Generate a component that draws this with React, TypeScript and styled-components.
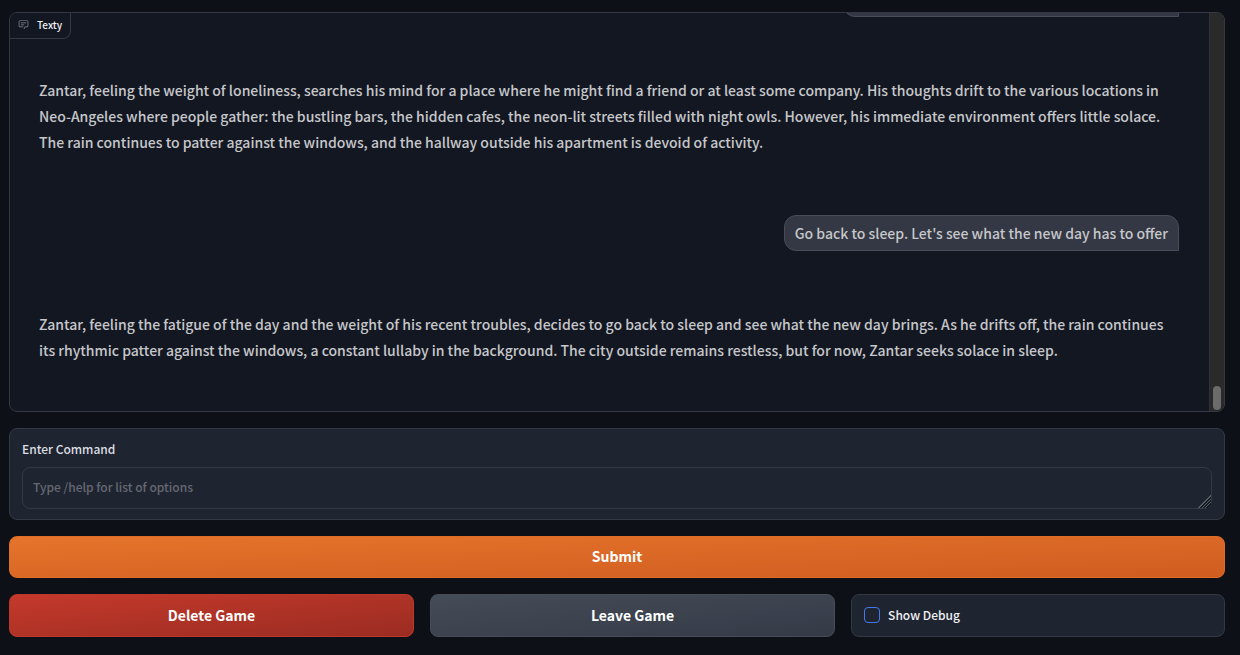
import React from "react";
import styled, { createGlobalStyle } from "styled-components";

const GlobalStyle = createGlobalStyle`
  *, *::before, *::after { box-sizing: border-box; }
  body {
    margin: 0;
    background: #0d1017;
    color: #f0f1f4;
    font-family: "Source Sans Pro", "Noto Sans CJK SC", "Noto Sans", sans-serif;
    font-size: 12px;
    font-weight: 500;
  }
`;

const Page = styled.main`
  display: flex;
  flex-direction: column;
  gap: 16px;
  padding: 12px 15px 16px 9px;
`;

const ChatPanel = styled.section`
  position: relative;
  display: flex;
  height: 400px;
  overflow: hidden;
  background: #131722;
  border: 1px solid #343844;
  border-radius: 8px;
`;

const ChatLabel = styled.h2`
  position: absolute;
  top: 0;
  left: 0;
  display: flex;
  align-items: center;
  gap: 8px;
  height: 26px;
  margin: 0;
  padding: 0 8px 2px;
  background: #131722;
  border: solid #343844;
  border-width: 0 1px 1px 0;
  border-radius: 0 0 8px 0;
  font-size: 10px;
  font-weight: 500;
  line-height: 16px;

  svg { color: #8b8e96; }
`;

const Messages = styled.div`
  flex: 1;
  min-width: 0;
  display: flex;
  flex-direction: column;
  justify-content: flex-end;
  gap: 60px;
  padding: 0 30px 48px 29px;
`;

const BotMessage = styled.p`
  margin: 0;
  padding-right: 8px;
  color: #c6c7ca;
  font-size: 14px;
  line-height: 26px;
`;

const UserMessage = styled.p<{ $minWidth?: number }>`
  align-self: flex-end;
  flex-shrink: 0;
  min-width: ${(p) => p.$minWidth ?? 0}px;
  min-height: 36px;
  margin: 0;
  padding: 4px 10px;
  background: #343844;
  border: 1px solid #484c58;
  border-radius: 12px 12px 0 12px;
  color: #c6c7ca;
  font-size: 14px;
  line-height: 26px;
`;

const ScrollTrack = styled.div`
  display: flex;
  flex-direction: column;
  justify-content: flex-end;
  align-items: center;
  width: 15px;
  padding-bottom: 1px;
  background: #2a2a2a;
  border-left: 1px solid #323232;
`;

const ScrollThumb = styled.div`
  width: 8px;
  height: 24px;
  background: #6b6b6b;
  border-radius: 4px;
`;

const Block = styled.div`
  background: #1f2530;
  border: 1px solid #343844;
  border-radius: 8px;
`;

const CommandBlock = styled(Block)`
  display: flex;
  flex-direction: column;
  gap: 8px;
  padding: 10px 12px;
`;

const CommandLabel = styled.label`
  color: #dcdee3;
  line-height: 20px;
`;

const CommandInput = styled.textarea`
  display: block;
  width: 100%;
  height: 42px;
  padding: 9px 10px;
  background: #1f2530;
  border: 1px solid #343844;
  border-radius: 8px;
  color: #f0f1f4;
  font: inherit;
  line-height: 20px;
  resize: vertical;
  overflow: hidden;

  &::placeholder { color: #656873; opacity: 1; }

  &::-webkit-resizer {
    background: linear-gradient(
      135deg,
      transparent 56%,
      #565b64 56% 61%, #171b23 61% 67%,
      #565b64 67% 72%, #171b23 72% 78%,
      #565b64 78% 83%, #171b23 83% 88%,
      transparent 88%
    );
  }
`;

const tones = {
  primary: { from: "#e5742b", to: "#d05c20", border: "#e06c25" },
  stop: { from: "#c4392b", to: "#9b2c22", border: "#bd372a" },
  secondary: { from: "#444c57", to: "#353a47", border: "#464c58" },
};

const Button = styled.button<{ $tone: keyof typeof tones }>`
  min-height: 42px;
  padding: 7px 16px 9px;
  background: linear-gradient(to bottom right, ${(p) => tones[p.$tone].from}, ${(p) => tones[p.$tone].to});
  border: 1px solid ${(p) => tones[p.$tone].border};
  border-radius: 8px;
  color: #fff;
  font: inherit;
  font-size: 14px;
  font-weight: 700;
  line-height: 24px;
  cursor: pointer;
`;

const Actions = styled.div`
  display: grid;
  grid-template-columns: 13fr 13fr 12fr;
  gap: 16px;
  min-height: 43px;
`;

const DebugBlock = styled(Block)`
  display: flex;
  align-items: center;
  padding: 0 12px 2px;
`;

const DebugLabel = styled.label`
  display: flex;
  align-items: center;
  gap: 8px;
  line-height: 20px;
`;

const Checkbox = styled.input`
  appearance: none;
  width: 16px;
  height: 16px;
  margin: 0;
  background: #1f2530;
  border: 1px solid #4676ee;
  border-radius: 4px;

  &:checked { background: #4676ee; }
`;

const ChatIcon = () => (
  <svg width="11" height="11" viewBox="0 0 32 32" fill="currentColor" aria-hidden="true">
    <path d="M17.74 30L16 29l4-7h6a2 2 0 0 0 2-2V8a2 2 0 0 0-2-2H6a2 2 0 0 0-2 2v12a2 2 0 0 0 2 2h9v2H6a4 4 0 0 1-4-4V8a4 4 0 0 1 4-4h20a4 4 0 0 1 4 4v12a4 4 0 0 1-4 4h-4.84Z" />
    <path d="M8 10h16v2H8zM8 16h10v2H8z" />
  </svg>
);

export default function App() {
  return (
    <>
      <GlobalStyle />
      <Page>
        <ChatPanel>
          <Messages>
            <UserMessage $minWidth={336} />
            <BotMessage>
              Zantar, feeling the weight of loneliness, searches his mind for a place where he might find a friend or at
              least some company. His thoughts drift to the various locations in Neo-Angeles where people gather: the
              bustling bars, the hidden cafes, the neon-lit streets filled with night owls. However, his immediate
              environment offers little solace. The rain continues to patter against the windows, and the hallway
              outside his apartment is devoid of activity.
            </BotMessage>
            <UserMessage>Go back to sleep. Let's see what the new day has to offer</UserMessage>
            <BotMessage>
              Zantar, feeling the fatigue of the day and the weight of his recent troubles, decides to go back to sleep
              and see what the new day brings. As he drifts off, the rain continues its rhythmic patter against the
              windows, a constant lullaby in the background. The city outside remains restless, but for now, Zantar
              seeks solace in sleep.
            </BotMessage>
          </Messages>
          <ScrollTrack>
            <ScrollThumb />
          </ScrollTrack>
          <ChatLabel>
            <ChatIcon />
            Texty
          </ChatLabel>
        </ChatPanel>
        <CommandBlock>
          <CommandLabel htmlFor="command">Enter Command</CommandLabel>
          <CommandInput id="command" rows={1} placeholder="Type /help for list of options" />
        </CommandBlock>
        <Button type="button" $tone="primary">Submit</Button>
        <Actions>
          <Button type="button" $tone="stop">Delete Game</Button>
          <Button type="button" $tone="secondary">Leave Game</Button>
          <DebugBlock>
            <DebugLabel>
              <Checkbox type="checkbox" />
              Show Debug
            </DebugLabel>
          </DebugBlock>
        </Actions>
      </Page>
    </>
  );
}
